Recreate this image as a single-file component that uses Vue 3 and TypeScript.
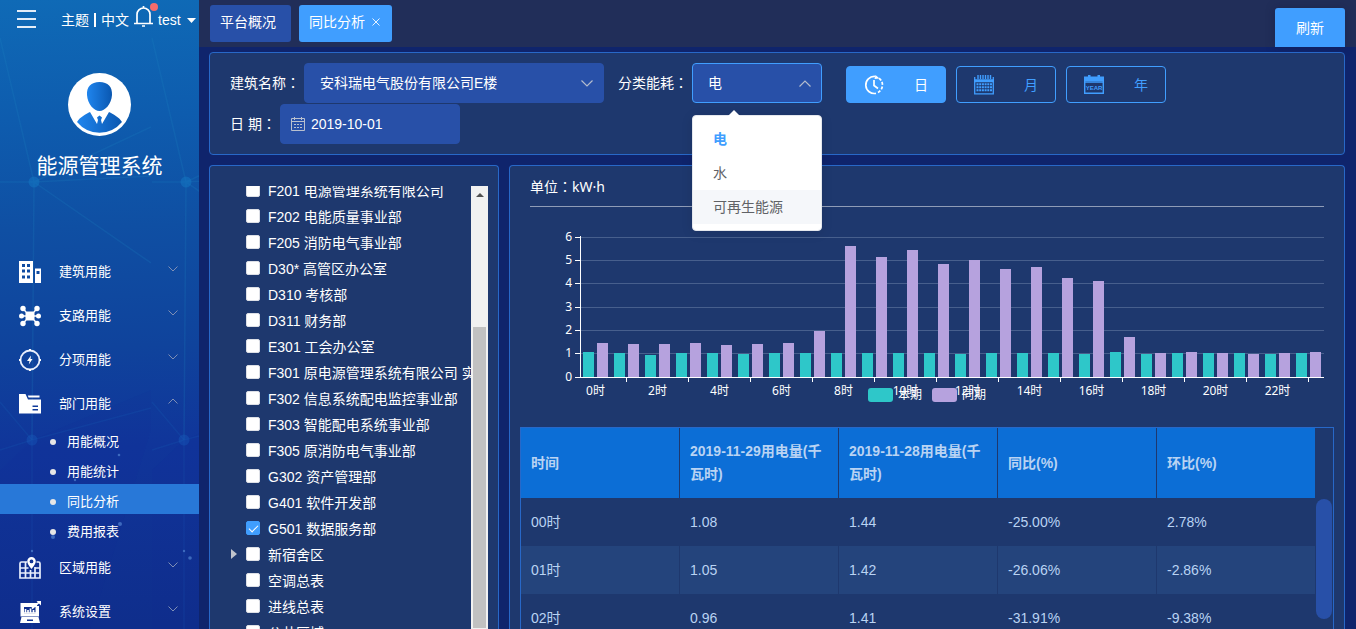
<script setup lang="ts">
import { computed, onBeforeUnmount, onMounted, ref } from 'vue'

interface MenuItem {
  label: string
  icon: string
  children?: string[]
}

const menu: MenuItem[] = [
  { label: '建筑用能', icon: 'building' },
  { label: '支路用能', icon: 'branch' },
  { label: '分项用能', icon: 'bolt' },
  { label: '部门用能', icon: 'folder', children: ['用能概况', '用能统计', '同比分析', '费用报表'] },
  { label: '区域用能', icon: 'map' },
  { label: '系统设置', icon: 'settings' },
]
const activeSub = ref('同比分析')

interface TreeNode {
  label: string
  checked?: boolean
  expandable?: boolean
}

const tree = ref<TreeNode[]>([
  { label: 'F201 电源管理系统有限公司' },
  { label: 'F202 电能质量事业部' },
  { label: 'F205 消防电气事业部' },
  { label: 'D30* 高管区办公室' },
  { label: 'D310 考核部' },
  { label: 'D311 财务部' },
  { label: 'E301 工会办公室' },
  { label: 'F301 原电源管理系统有限公司 实验室' },
  { label: 'F302 信息系统配电监控事业部' },
  { label: 'F303 智能配电系统事业部' },
  { label: 'F305 原消防电气事业部' },
  { label: 'G302 资产管理部' },
  { label: 'G401 软件开发部' },
  { label: 'G501 数据服务部', checked: true },
  { label: '新宿舍区', expandable: true },
  { label: '空调总表' },
  { label: '进线总表' },
  { label: '公共区域' },
])

const building = ref('安科瑞电气股份有限公司E楼')
const energyTypes = ['电', '水', '可再生能源']
const energy = ref('电')
const hovered = ref('可再生能源')
const menuOpen = ref(true)
const date = ref('2019-10-01')
const period = ref('日')

function pickEnergy(type: string) {
  energy.value = type
  menuOpen.value = false
}

const current = [1.08, 1.05, 0.96, 1.05, 1.02, 0.98, 1.02, 1.02, 1.02, 1.02, 1.02, 1.02, 0.98, 1.02, 1.02, 1.02, 0.98, 1.07, 0.98, 1.02, 1.02, 1.02, 0.98, 1.02]
const previous = [1.44, 1.42, 1.41, 1.44, 1.37, 1.42, 1.44, 1.98, 5.62, 5.17, 5.44, 4.84, 5.02, 4.63, 4.7, 4.24, 4.1, 1.72, 1.02, 1.06, 1.02, 0.99, 1.02, 1.06]

const chartEl = ref<HTMLElement | null>(null)
const chartWidth = ref(794)
let observer: ResizeObserver | undefined
onMounted(() => {
  const el = chartEl.value
  if (!el) return
  chartWidth.value = el.clientWidth
  observer = new ResizeObserver(() => {
    chartWidth.value = el.clientWidth
  })
  observer.observe(el)
})
onBeforeUnmount(() => observer?.disconnect())

const axisX = 50
const baseY = 170
const unitH = 23.3
const step = computed(() => (chartWidth.value - axisX) / 24)
const barW = computed(() => Math.round(step.value * 0.355))
const bars = computed(() =>
  current.map((value, i) => {
    const left = Math.round(axisX + i * step.value)
    const h1 = Math.round(value * unitH)
    const h2 = Math.round(previous[i] * unitH)
    return { x1: left + 3, x2: left + 17, h1, h2 }
  }),
)
const gridLines = [0, 1, 2, 3, 4, 5, 6].map((n) => ({ n, y: Math.floor(baseY - n * unitH) }))
const hourLabels = computed(() =>
  Array.from({ length: 12 }, (_, k) => ({
    text: `${k * 2}时`,
    x: axisX + (k * 2 + 0.5) * step.value,
    tick: Math.floor(axisX + (k * 2 + 1.5) * step.value),
  })),
)
const mid = computed(() => Math.round(chartWidth.value / 2))

const columns = ['时间', '2019-11-29用电量(千瓦时)', '2019-11-28用电量(千瓦时)', '同比(%)', '环比(%)']
const rows = [
  ['00时', '1.08', '1.44', '-25.00%', '2.78%'],
  ['01时', '1.05', '1.42', '-26.06%', '-2.86%'],
  ['02时', '0.96', '1.41', '-31.91%', '-9.38%'],
]
</script>

<template>
  <div class="app">
    <aside class="sidebar">
      <svg class="net" width="199" height="629" viewBox="0 0 199 629" aria-hidden="true">
        <defs>
          <g id="net-tile">
            <path d="M0 38 34 182M0 182H34L151 176M34 182 151 127M34 182 151 263M34 182 32 440" fill="none" stroke="#1d86c4" stroke-opacity=".2" stroke-width="1.5" />
            <path d="M0 402 32 440 151 408M0 450 32 440V629" fill="none" stroke="#1d76c4" stroke-opacity=".14" stroke-width="1.5" />
            <circle cx="34" cy="182" r="5.500" fill="#1477c4" fill-opacity=".5" />
            <circle cx="32" cy="440" r="5.500" fill="#1a60c0" fill-opacity=".35" />
            <path d="M32 440 151 390V430L90 629H0V470Z" fill="#1020a0" fill-opacity=".06" />
          </g>
          <clipPath id="tile-clip"><path d="M0 0H151V629H0Z" /></clipPath>
        </defs>
        <use href="#net-tile" clip-path="url(#tile-clip)" />
        <use href="#net-tile" x="152" />
        <g fill="#5b8fd8" fill-opacity=".6">
          <circle cx="119" cy="455" r="1.300" /><circle cx="120" cy="524" r="2" /><circle cx="53" cy="537" r="2" />
          <circle cx="75" cy="480" r="1.200" /><circle cx="32" cy="551" r="1.200" /><circle cx="184" cy="551" r="1.200" /><circle cx="190" cy="558" r="1.800" />
        </g>
      </svg>

      <div class="tools">
        <button class="burger" aria-label="折叠菜单"><i></i><i></i><i></i></button>
        <span class="links"><button>主题</button><i class="bar"></i><button>中文</button></span>
        <button class="bell" aria-label="消息">
          <svg width="25" height="26" viewBox="0 0 25 26">
            <path d="M1 21.500H20M4 21V12.500A6.500 6.500 0 0 1 17 12.500V21M10.500 6V4M9 24H12" fill="none" stroke="#fff" stroke-width="1.700" />
            <circle cx="21" cy="5" r="4" fill="#f56c6c" />
          </svg>
        </button>
        <button class="user">test<svg width="9" height="5" viewBox="0 0 9 5"><path d="M0 0H9L4.500 5Z" fill="#fff" /></svg></button>
      </div>

      <div class="brand">
        <svg width="63" height="63" viewBox="0 0 63 63" aria-hidden="true">
          <defs>
            <linearGradient id="skin"><stop offset="0" stop-color="#1f85ee" /><stop offset="1" stop-color="#0a57b0" /></linearGradient>
          </defs>
          <circle cx="31.500" cy="31.500" r="31.500" fill="#fff" />
          <path d="M31.500 9C40 9 44.500 14 44 22 43.500 31 37 38 31.500 38S19.500 31 19 22C18.500 14 23 9 31.500 9Z" fill="url(#skin)" />
          <path d="M9 49C12 44 18 41 22 39L29 51 30 47 29 44.500 31.500 42.500 34 44.500 33 47 34 51 41 39C45 41 51 44 54 49A29 29 0 0 1 9 49Z" fill="url(#skin)" />
        </svg>
        <h1>能源管理系统</h1>
      </div>

      <nav>
        <template v-for="item in menu" :key="item.label">
          <button class="item">
            <svg width="22" height="22" viewBox="0 0 22 22" aria-hidden="true">
              <g v-if="item.icon === 'building'">
                <path fill-rule="evenodd" fill="#fff" d="M0 0H14V22H0ZM3 3V6H6V3ZM8 3V6H11V3ZM3 8.500V11.500H6V8.500ZM8 8.500V11.500H11V8.500ZM3 14.500V17.500H6V14.500ZM8 14.500V17.500H11V14.500ZM16 7.500H22V22H16ZM17.500 10V13H20.500V10Z" />
              </g>
              <g v-else-if="item.icon === 'branch'" fill="#fff" stroke="#fff">
                <path d="M4 3.500 7 7 9 9M18 3.500 15 7 13 9M2.500 11H19.500M4 18.500 7 15 9 13M18 18.500 15 15 13 13" fill="none" stroke-width="1.500" />
                <rect x="7" y="7" width="8" height="8" rx="1" />
                <g stroke="none"><circle cx="4" cy="3.500" r="2.700" /><circle cx="18" cy="3.500" r="2.700" /><circle cx="2.500" cy="11" r="2.500" /><circle cx="19.500" cy="11" r="2.500" /><circle cx="4" cy="18.500" r="2.700" /><circle cx="18" cy="18.500" r="2.700" /></g>
              </g>
              <g v-else-if="item.icon === 'bolt'">
                <circle cx="11" cy="11" r="9.500" fill="none" stroke="#e8eefc" stroke-width="1.800" />
                <path d="M11 0V2M11 20V22M0 11H2M20 11H22" stroke="#fff" stroke-width="2" />
                <path d="M12 6.500 8 12H10.500L9.800 15.500 13.500 10H11.500Z" fill="#fff" />
              </g>
              <g v-else-if="item.icon === 'folder'">
                <path fill="#fff" fill-rule="evenodd" d="M0 1H6.500L9 6.500H22V20.500H0ZM13.500 12.500V14H19V12.500ZM13.500 16V17.500H19V16Z" />
                <path d="M8.800 2.500H20.500V4.500H9.600Z" fill="#fff" />
              </g>
              <g v-else-if="item.icon === 'map'">
                <path d="M8 5H2.500Q1 5 1 6.500V21H21V6.500Q21 5 19.500 5H17.500M6.500 5V21M11.500 13V21M16 10V21M1 11H9.500M15.500 11H21M1 16H21" fill="none" stroke="#e8eefc" stroke-width="1.700" />
                <path d="M12.500 0A4.300 4.300 0 0 1 16.800 4.300C16.800 7.500 12.500 12 12.500 12S8.200 7.500 8.200 4.300A4.300 4.300 0 0 1 12.500 0ZM12.500 2.500A1.900 1.900 0 1 0 12.500 6.300A1.900 1.900 0 1 0 12.500 2.500Z" fill="#fff" fill-rule="evenodd" />
              </g>
              <g v-else>
                <path fill="#fff" fill-rule="evenodd" d="M1.500 2H18V5H20V15.500H1.500ZM5 6V12.500H16.500V6Z" />
                <path d="M6.500 12V8M9 12V9M11.500 12V7.500M14.500 12V9M5 12H17M13 7.500 20.500 .800" stroke="#fff" stroke-width="1.700" fill="none" />
                <path d="M17.500 0H22V4.500Z" fill="#fff" />
                <path fill="#fff" fill-rule="evenodd" d="M2.500 16H19.500L21 22H1ZM8 18.500V20H14V18.500Z" />
              </g>
            </svg>
            <span>{{ item.label }}</span>
            <svg class="chev" :class="{ up: item.children }" width="10" height="6" viewBox="0 0 10 6"><path d="M.5 .5 5 5 9.500 .5" fill="none" stroke="#7f8fb5" /></svg>
          </button>
          <a
            v-for="sub in item.children ?? []"
            :key="sub"
            href="#"
            class="sub"
            :class="{ active: sub === activeSub }"
            @click.prevent="activeSub = sub"
          ><i></i>{{ sub }}</a>
        </template>
      </nav>
    </aside>

    <div class="main">
      <header class="topbar">
        <div class="tabs">
          <button class="tab">平台概况</button>
          <button class="tab active">同比分析<svg width="8" height="8" viewBox="0 0 8 8"><path d="M.5 .5 7.500 7.500M7.500 .5 .5 7.500" stroke="#e6f2ff" fill="none" /></svg></button>
        </div>
        <button class="refresh">刷新</button>
      </header>

      <section class="panel filters">
        <div class="line">
          <label for="building">建筑名称<span class="colon">：</span></label>
          <div class="field wide">
            <select id="building" v-model="building"><option>安科瑞电气股份有限公司E楼</option></select>
            <svg class="arrow" width="12" height="7" viewBox="0 0 12 7"><path d="M.5 .5 6 6 11.500 .5" fill="none" stroke="#b4bccd" stroke-width="1.200" /></svg>
          </div>
          <label for="energy" class="second">分类能耗<span class="colon">：</span></label>
          <div class="field narrow">
            <select id="energy" v-model="energy" :class="{ open: menuOpen }" @mousedown.prevent="menuOpen = !menuOpen">
              <option v-for="t in energyTypes" :key="t">{{ t }}</option>
            </select>
            <svg class="arrow up" width="12" height="7" viewBox="0 0 12 7"><path d="M.5 .5 6 6 11.500 .5" fill="none" stroke="#b4bccd" stroke-width="1.200" /></svg>
            <ul v-if="menuOpen" class="popup" role="listbox">
              <li
                v-for="t in energyTypes"
                :key="t"
                role="option"
                :aria-selected="t === energy"
                :class="{ chosen: t === energy, hover: t === hovered }"
                @mouseenter="hovered = t"
                @click="pickEnergy(t)"
              >{{ t }}</li>
            </ul>
          </div>
          <div class="periods">
            <button :class="{ on: period === '日' }" @click="period = '日'">
              <svg width="20" height="20" viewBox="0 0 20 20">
                <path d="M11 1.500A8.500 8.500 0 1 0 12 18.300" fill="none" stroke="currentColor" stroke-width="1.700" />
                <path d="M14 17.500A8.500 8.500 0 0 0 14.500 2.800" fill="none" stroke="currentColor" stroke-width="1.700" stroke-dasharray="3 1.600" />
                <path d="M10 5V10.500L14 13.500" fill="none" stroke="currentColor" stroke-width="1.700" />
                <path d="M11.500 0 15.500 3.500 10.500 4Z" fill="currentColor" />
              </svg>日
            </button>
            <button :class="{ on: period === '月' }" @click="period = '月'">
              <svg width="20" height="20" viewBox="0 0 20 20">
                <path d="M.7 2V18.800H19.300V2M0 5H20M0 6.500H20" fill="none" stroke="currentColor" stroke-width="1.300" />
                <path d="M4 0V4M6.500 0V4M9 0V4M11.500 0V4M14 0V4M16.500 0V4" stroke="currentColor" stroke-width="1.400" />
                <path d="M2.500 9.300H18M2.500 12.300H18M2.500 15.300H18" stroke="currentColor" stroke-width="2" stroke-dasharray="2 .700" />
              </svg>月
            </button>
            <button :class="{ on: period === '年' }" @click="period = '年'">
              <svg width="20" height="20" viewBox="0 0 20 20">
                <path d="M0 1.500H4V0H6.500V1.500H13.500V0H16V1.500H20V6H0Z" fill="currentColor" />
                <path d="M.7 6V18.300H19.300V6M.7 7H19.300" fill="none" stroke="currentColor" stroke-width="1.400" />
                <text x="10" y="15" text-anchor="middle" class="yr">YEAR</text>
              </svg>年
            </button>
          </div>
        </div>
        <div class="line day">
          <label for="date">日 期<span class="colon">：</span></label>
          <div class="field date">
            <svg class="cal" width="14" height="14" viewBox="0 0 14 14">
              <path d="M.5 1.500H13.500V13.500H.5ZM.5 4.500H13.500M3.500 0V3M10.500 0V3" fill="none" stroke="#b9c0cf" />
              <path d="M3 7.500H11M3 10.500H11" stroke="#b9c0cf" stroke-dasharray="2 1" />
            </svg>
            <input id="date" v-model="date" type="text" />
          </div>
        </div>
      </section>

      <div class="content">
        <section class="panel tree">
          <div class="tree-view">
            <ul>
              <li v-for="(node, i) in tree" :key="node.label">
                <span class="caret" :class="{ shown: node.expandable }"></span>
                <input :id="`node-${i}`" v-model="node.checked" type="checkbox" />
                <label :for="`node-${i}`">{{ node.label }}</label>
              </li>
            </ul>
          </div>
          <div class="scrollbar" aria-hidden="true"><i class="head"></i><i class="thumb"></i></div>
        </section>

        <section class="panel data">
          <h2>单位<span class="colon">：</span>kW·h</h2>
          <div ref="chartEl" class="chart">
            <svg :width="chartWidth" height="210" role="img" aria-label="本期与同期用电量">
              <g shape-rendering="crispEdges">
                <rect v-for="g in gridLines.slice(1)" :key="g.n" :x="axisX + 1" :y="g.y" :width="chartWidth - axisX" height="1" fill="#475f8d" />
                <g v-for="(b, i) in bars" :key="i">
                  <rect :x="b.x1" :y="baseY - b.h1" :width="barW" :height="b.h1" fill="#2ec7c9" />
                  <rect :x="b.x2" :y="baseY - b.h2" :width="barW" :height="b.h2" fill="#b6a2de" />
                </g>
                <rect :x="axisX" y="29" width="1" height="142" fill="#fff" />
                <rect :x="axisX" :y="baseY" :width="chartWidth - axisX" height="1" fill="#fff" />
                <rect v-for="g in gridLines" :key="g.n" :x="axisX - 5" :y="g.y" width="5" height="1" fill="#fff" />
                <rect v-for="h in hourLabels" :key="h.text" :x="h.tick" :y="baseY" width="1" height="5" fill="#fff" />
              </g>
              <text v-for="g in gridLines" :key="g.n" :x="axisX - 8" :y="g.y + 4" text-anchor="end">{{ g.n }}</text>
              <text v-for="h in hourLabels" :key="h.text" :x="h.x" :y="baseY + 18" text-anchor="middle">{{ h.text }}</text>
              <rect :x="mid - 59" y="181" width="25" height="14" rx="3" fill="#2ec7c9" />
              <text :x="mid - 29" y="192">本期</text>
              <rect :x="mid + 5" y="181" width="25" height="14" rx="3" fill="#b6a2de" />
              <text :x="mid + 35" y="192">同期</text>
            </svg>
          </div>
          <div class="table-box">
            <table>
              <thead><tr><th v-for="c in columns" :key="c">{{ c }}</th></tr></thead>
              <tbody>
                <tr v-for="r in rows" :key="r[0]"><td v-for="(v, i) in r" :key="i">{{ v }}</td></tr>
              </tbody>
            </table>
            <i class="table-thumb" aria-hidden="true"></i>
          </div>
        </section>
      </div>
    </div>
  </div>
</template>

<style>
body {
  margin: 0;
  overflow: hidden;
}
</style>

<style scoped>
* {
  box-sizing: border-box;
}
.app {
  display: flex;
  height: 100vh;
  overflow: hidden;
  background: #0f246c;
  color: #fff;
  font: 14px/20px "Liberation Sans", "Noto Sans CJK SC", sans-serif;
}
button,
select,
input {
  margin: 0;
  padding: 0;
  border: 0;
  background: none;
  color: inherit;
  font: inherit;
}
button,
select {
  cursor: pointer;
}
ul {
  margin: 0;
  padding: 0;
  list-style: none;
}
svg {
  flex: none;
}
.colon {
  font-family: "Noto Sans CJK TC", sans-serif;
  line-height: 1;
}

.sidebar {
  position: relative;
  flex: none;
  width: 199px;
  overflow: hidden;
  background: linear-gradient(178deg, #0f6ab6 0, #0e5cae 120px, #0f4fa3 230px, #0f439c 350px, #10359a 450px, #0f2e8c 629px);
}
.net {
  position: absolute;
  inset: 0;
}
.tools,
.brand,
nav {
  position: relative;
}
.tools {
  display: flex;
  align-items: center;
  height: 40px;
  padding-left: 17px;
}
.burger {
  display: flex;
  flex-direction: column;
  gap: 6px;
  width: 19px;
  margin-bottom: 2px;
}
.burger i {
  height: 2px;
  background: #e4edf8;
}
.links {
  display: flex;
  align-items: center;
  margin-left: 25px;
}
.bar {
  width: 2px;
  height: 14px;
  margin: 0 5px;
  background: #fff;
}
.bell {
  display: flex;
  align-self: flex-start;
  margin: 2px 0 0 4px;
}
.user {
  display: flex;
  align-items: center;
  gap: 6px;
}
.brand {
  display: flex;
  flex-direction: column;
  align-items: center;
  gap: 15px;
  height: 208px;
  padding-top: 33px;
}
h1 {
  margin: 0;
  font-size: 21px;
  font-weight: 400;
  line-height: 30px;
}
.item {
  display: flex;
  align-items: center;
  width: 100%;
  height: 44px;
  padding: 4px 21px 0 19px;
  font-size: 13px;
  text-align: left;
}
.item span {
  flex: 1;
  padding-left: 18px;
}
.chev {
  margin-bottom: 6px;
}
.up {
  transform: rotate(180deg);
}
.sub {
  display: flex;
  align-items: center;
  gap: 11px;
  height: 30px;
  padding: 6px 0 0 50px;
  color: #fff;
  font-size: 13px;
  text-decoration: none;
}
.sub i {
  width: 6px;
  height: 6px;
  border-radius: 3px;
  background: #e6e6e6;
}
.sub.active {
  background: #2878d8;
}

.main {
  display: flex;
  flex: 1;
  flex-direction: column;
  min-width: 0;
}
.topbar {
  display: flex;
  align-items: flex-end;
  justify-content: space-between;
  flex: none;
  height: 47px;
  padding: 0 11px;
  background: #212e59;
}
.tabs {
  display: flex;
  gap: 8px;
  padding-bottom: 5px;
}
.tab {
  display: flex;
  align-items: center;
  gap: 7px;
  height: 37px;
  padding: 0 15px 3px 10px;
  border-radius: 3px;
  background: #2850a8;
}
.tab.active {
  padding-right: 12px;
  background: #409eff;
}
.refresh {
  width: 70px;
  height: 39px;
  border-radius: 3px 3px 0 0;
  background: #409eff;
  box-shadow: 0 0 10px rgba(20, 20, 60, 0.35);
}
.panel {
  border: 1px solid #2868c8;
  border-radius: 4px;
  background: #1e386e;
}
.filters {
  flex: none;
  margin: 5px 11px 0 10px;
  padding: 10px 20px;
}
.line {
  display: flex;
  align-items: center;
  gap: 4px;
  height: 40px;
}
.day {
  margin-top: 1px;
}
.second {
  margin-left: 10px;
}
.field {
  position: relative;
  flex: none;
  height: 40px;
}
.wide {
  width: 300px;
}
.narrow {
  width: 130px;
}
.date {
  width: 180px;
}
.field select,
.field input {
  width: 100%;
  height: 40px;
  padding: 0 15px;
  border: 1px solid #2850a8;
  border-radius: 4px;
  background: #2850a8;
  appearance: none;
  outline: 0;
}
.field input {
  padding-left: 30px;
}
.field select.open {
  border-color: #409eff;
}
.arrow {
  position: absolute;
  top: 17px;
  right: 11px;
  pointer-events: none;
}
.cal {
  position: absolute;
  top: 13px;
  left: 11px;
}
.popup {
  position: absolute;
  z-index: 5;
  top: 52px;
  left: 0;
  width: 100%;
  padding: 6px 0;
  border: 1px solid #e4e7ed;
  border-radius: 4px;
  background: #fff;
  box-shadow: 0 2px 12px rgba(0, 0, 0, 0.1);
  color: #606266;
}
.popup::before {
  content: "";
  position: absolute;
  top: -6px;
  left: 35px;
  border: solid transparent;
  border-width: 0 6px 6px;
  border-bottom-color: #fff;
}
.popup li {
  padding: 0 20px;
  line-height: 34px;
  cursor: pointer;
}
.popup .hover {
  background: #f5f7fa;
}
.popup .chosen {
  color: #409eff;
  font-weight: 700;
}
.periods {
  display: flex;
  gap: 10px;
  margin: 3px 0 0 20px;
}
.periods button {
  display: flex;
  align-items: center;
  justify-content: space-between;
  width: 100px;
  height: 37px;
  padding: 0 17px;
  border: 1px solid #409eff;
  border-radius: 4px;
  color: #409eff;
}
.periods .on {
  background: #409eff;
  color: #fff;
}
.yr {
  fill: currentColor;
  font: 700 6px "Liberation Sans", sans-serif;
}

.content {
  display: flex;
  flex: 1;
  gap: 10px;
  min-height: 0;
  padding: 10px 11px 0 10px;
}
.tree,
.data {
  border-bottom: 0;
  border-radius: 4px 4px 0 0;
}
.tree {
  display: flex;
  flex: none;
  width: 290px;
  padding: 20px 10px 0 20px;
}
.tree-view {
  flex: 1;
  overflow: hidden;
}
.tree-view ul {
  margin-top: -9px;
}
.tree-view li {
  display: flex;
  align-items: center;
  height: 26px;
  white-space: nowrap;
}
.caret {
  flex: none;
  width: 6px;
  height: 10px;
  margin: 0 9px 0 1px;
}
.caret.shown {
  border: solid transparent;
  border-width: 5px 0 5px 6px;
  border-left-color: #c0c4cc;
}
.tree-view input {
  position: relative;
  flex: none;
  width: 14px;
  height: 14px;
  margin-right: 8px;
  border: 1px solid #dcdfe6;
  border-radius: 2px;
  background: #fff;
  appearance: none;
}
.tree-view input:checked {
  border-color: #409eff;
  background: #409eff;
}
.tree-view input:checked::after {
  content: "";
  position: absolute;
  top: 1px;
  left: 4px;
  width: 4px;
  height: 8px;
  border: solid #fff;
  border-width: 0 1px 1px 0;
  transform: rotate(45deg);
}
.tree-view label {
  padding-top: 2px;
}
.scrollbar {
  display: flex;
  flex: none;
  flex-direction: column;
  align-items: center;
  width: 17px;
  padding-top: 7px;
  background: #f1f1f1;
}
.head {
  border: solid transparent;
  border-width: 0 4px 4px;
  border-bottom-color: #505050;
}
.thumb {
  flex: 1;
  width: 13px;
  margin: 130px 0 1px;
  background: #c1c1c1;
}

.data {
  flex: 1;
  min-width: 0;
  padding: 10px 10px 0;
}
h2 {
  margin: 0 10px;
  height: 31px;
  border-bottom: 1px solid #8f9cb7;
  font: 14px/22px "Noto Sans", "Noto Sans CJK SC", sans-serif;
}
.chart {
  height: 220px;
  margin: 0 10px;
}
.chart svg {
  display: block;
}
.chart text {
  fill: #fff;
  font: 12px "Noto Sans", "Noto Sans CJK SC", sans-serif;
}
.table-box {
  display: flex;
  border: 1px solid #2868c8;
  border-bottom: 0;
  color: #b9d3f3;
}
table {
  flex: 1;
  border-collapse: separate;
  border-spacing: 0;
  table-layout: fixed;
  width: 100%;
}
th,
td {
  padding: 0 10px;
  border-right: 1px solid #1e386e;
  text-align: left;
}
th {
  height: 70px;
  background: #0c6ed6;
  line-height: 23px;
}
td {
  height: 48px;
}
tbody tr:nth-child(2) td {
  background: #24447c;
}
.table-thumb {
  flex: none;
  width: 16px;
  height: 120px;
  margin: 71px 1px 0 0;
  border-radius: 8px;
  background: #2850a8;
}
</style>
